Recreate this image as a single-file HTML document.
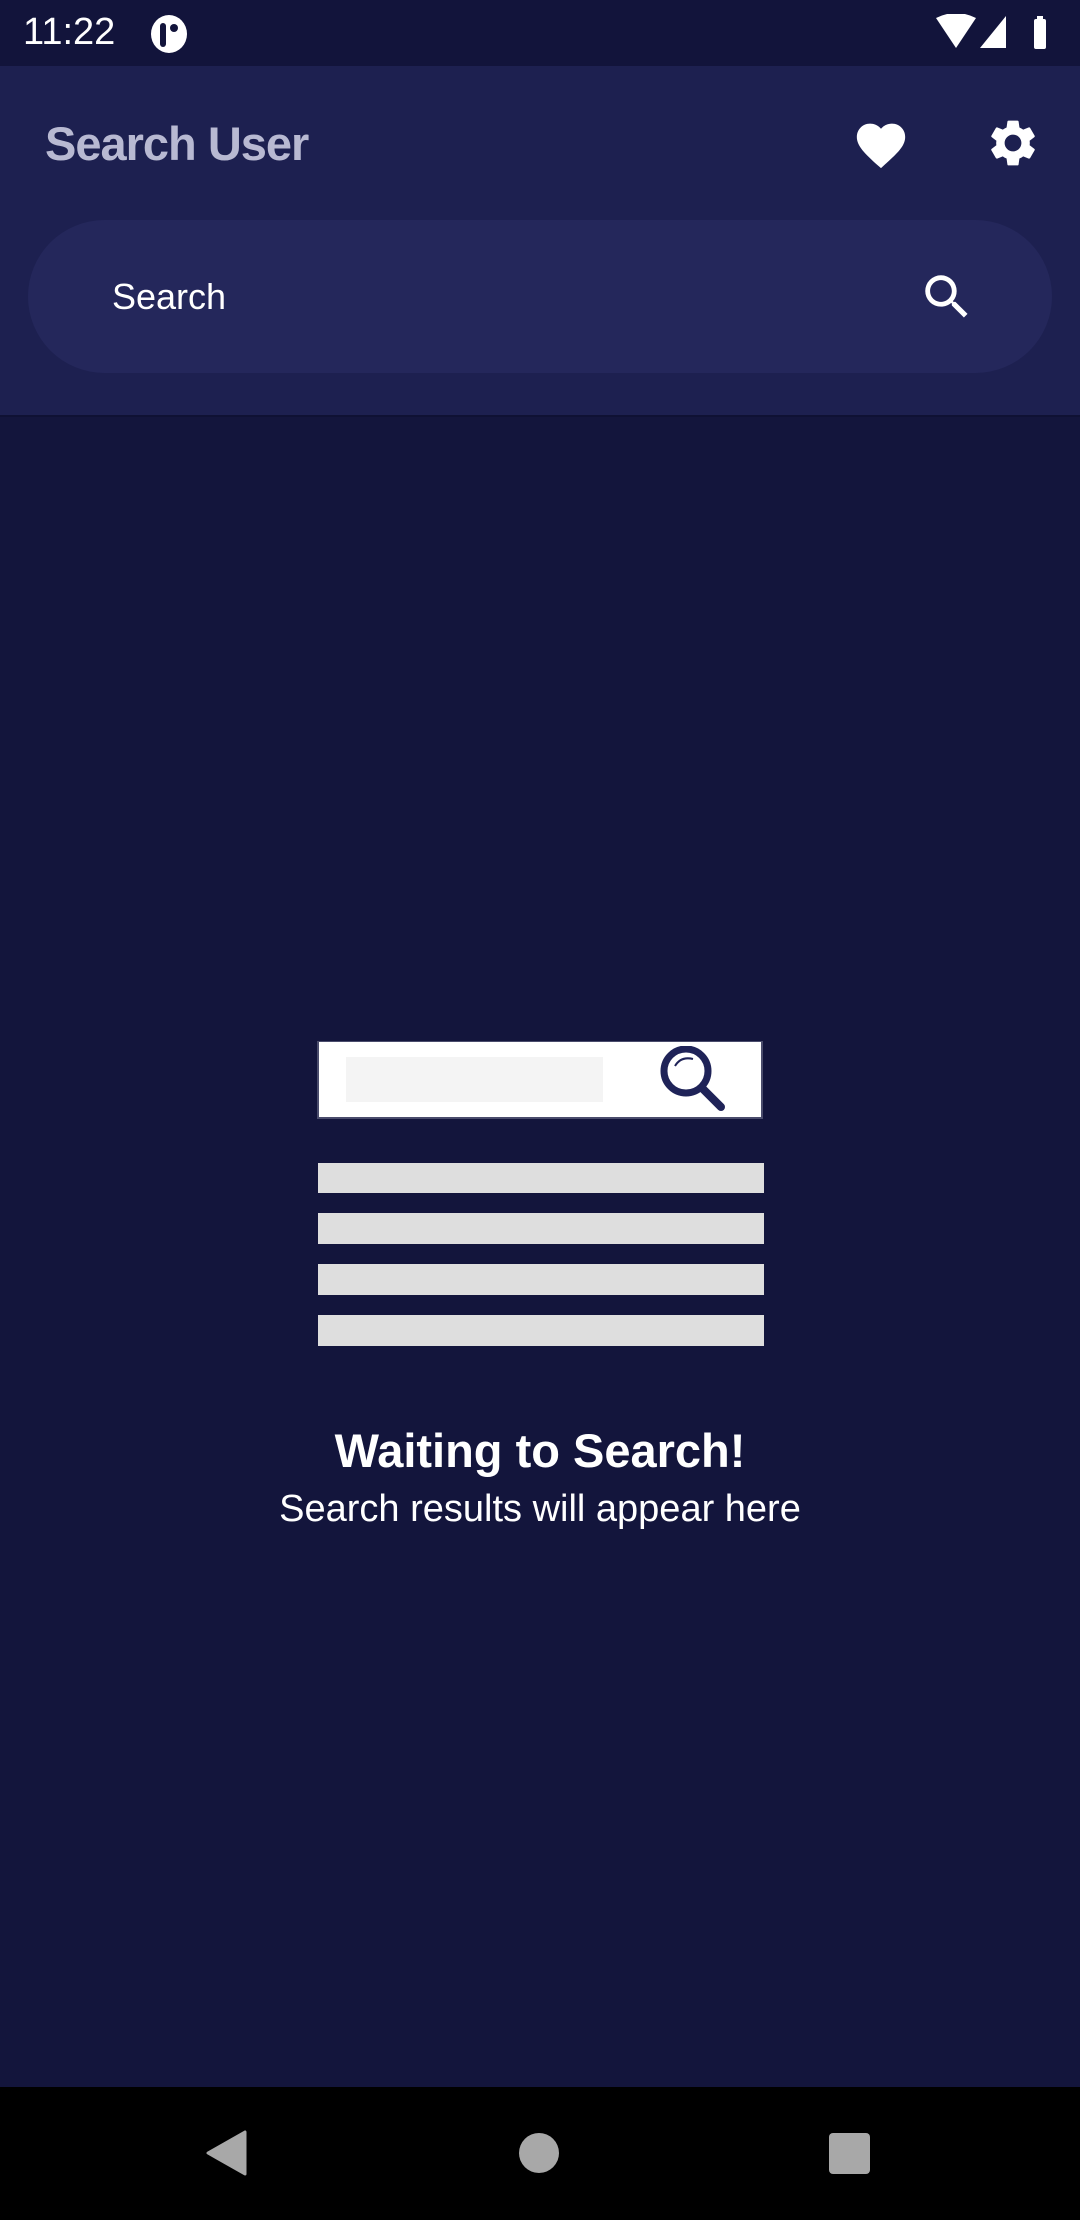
<!DOCTYPE html>
<html><head><meta charset="utf-8"><style>
*{margin:0;padding:0;box-sizing:border-box}
body{width:1080px;height:2220px;background:#13153c;font-family:"Liberation Sans",sans-serif;position:relative;overflow:hidden}
.abs{position:absolute}
</style></head><body>
<div class="abs" style="left:0;top:0;width:1080px;height:66px;background:#12143b"></div>
<div class="abs" style="left:23px;top:11px;color:#fff;font-size:38px">11:22</div>
<svg class="abs" style="left:150px;top:14px" width="38" height="40" viewBox="0 0 38 40"><ellipse cx="19" cy="20" rx="18" ry="19" fill="#fff"/><rect x="10" y="9" width="6" height="24" rx="3" fill="#12143b"/><circle cx="24" cy="14" r="4" fill="#12143b"/></svg>
<svg class="abs" style="left:936px;top:14px" width="110" height="38" viewBox="0 0 110 38"><path d="M0 4 Q20 -6 40 4 L20 34 Z" fill="#fff"/><path d="M44 34 L70 2 L70 34 Z" fill="#fff"/><rect x="101" y="2" width="6" height="4" fill="#fff"/><rect x="98" y="5" width="12" height="30" rx="2" fill="#fff"/></svg>
<div class="abs" style="left:0;top:66px;width:1080px;height:349px;background:#1d2050"></div>
<div class="abs" style="left:45px;top:116px;color:#b8b9d2;font-size:47px;font-weight:bold;letter-spacing:-1px">Search User</div>
<svg class="abs" style="left:852px;top:116px" width="58" height="54" viewBox="0 0 24 22"><path d="M12 21.4l-1.5-1.3C5.4 15.4 2 12.3 2 8.5 2 5.4 4.4 3 7.5 3c1.7 0 3.4.8 4.5 2.1C13.1 3.8 14.8 3 16.5 3 19.6 3 22 5.4 22 8.5c0 3.8-3.4 6.9-8.5 11.5L12 21.4z" fill="#fff"/></svg>
<svg class="abs" style="left:985px;top:115px" width="56" height="56" viewBox="0 0 24 24"><path fill="#fff" d="M19.14 12.94c.04-.3.06-.61.06-.94 0-.32-.02-.64-.07-.94l2.030-1.58a.49.49 0 00.12-.61l-1.92-3.32a.488.488 0 00-.59-.22l-2.39.96c-.5-.38-1.030-.7-1.62-.94l-.36-2.54a.484.484 0 00-.48-.41h-3.84c-.24 0-.43.17-.47.41l-.36 2.54c-.59.24-1.13.57-1.62.94l-2.39-.96c-.22-.08-.47 0-.59.22L2.74 8.87c-.12.21-.08.47.12.61l2.030 1.58c-.05.3-.09.63-.09.94s.02.64.07.94l-2.030 1.58a.49.49 0 00-.12.61l1.92 3.32c.12.22.37.29.59.22l2.39-.96c.5.38 1.030.7 1.62.94l.36 2.54c.05.24.24.41.48.41h3.84c.24 0 .44-.17.47-.41l.36-2.54c.59-.24 1.13-.56 1.62-.94l2.39.96c.22.08.47 0 .59-.22l1.92-3.32c.12-.22.07-.47-.12-.61l-2.010-1.58zM12 15.6c-1.98 0-3.6-1.62-3.6-3.6s1.62-3.6 3.6-3.6 3.6 1.62 3.6 3.6-1.62 3.6-3.6 3.6z"/></svg>
<div class="abs" style="left:28px;top:220px;width:1024px;height:153px;border-radius:77px;background:#24275b"></div>
<div class="abs" style="left:112px;top:276px;color:#fff;font-size:36px">Search</div>
<svg class="abs" style="left:918px;top:268px" width="58" height="58" viewBox="0 0 24 24"><path fill="#fff" d="M15.5 14h-.79l-.28-.27A6.47 6.47 0 0016 9.5 6.5 6.5 0 109.5 16c1.61 0 3.09-.59 4.23-1.57l.27.28v.79l5 4.99L20.49 19l-4.99-5zm-6 0C7.010 14 5 11.99 5 9.5S7.010 5 9.5 5 14 7.010 14 9.5 11.99 14 9.5 14z"/></svg>
<div class="abs" style="left:0;top:415px;width:1080px;height:2px;background:#0f1134"></div>

<div class="abs" style="left:317px;top:1041px;width:446px;height:78px;background:#4a4c6c"></div>
<div class="abs" style="left:319px;top:1042px;width:442px;height:75px;background:#fff"></div>
<div class="abs" style="left:346px;top:1057px;width:257px;height:45px;background:#f4f4f4"></div>
<svg class="abs" style="left:660px;top:1046px" width="75" height="72" viewBox="0 0 75 72"><circle cx="26" cy="25" r="22" fill="none" stroke="#1f2358" stroke-width="7"/><line x1="42" y1="42" x2="61" y2="61" stroke="#1f2358" stroke-width="8" stroke-linecap="round"/><path d="M15 20 Q21 10 33 13" fill="none" stroke="#1f2358" stroke-width="2"/></svg>
<div class="abs" style="left:318px;top:1163px;width:446px;height:30px;background:#dedede"></div>
<div class="abs" style="left:318px;top:1213px;width:446px;height:31px;background:#dedede"></div>
<div class="abs" style="left:318px;top:1264px;width:446px;height:31px;background:#dedede"></div>
<div class="abs" style="left:318px;top:1315px;width:446px;height:31px;background:#dedede"></div>
<div class="abs" style="left:0;top:1423px;width:1080px;text-align:center;color:#fff;font-size:47px;font-weight:bold">Waiting to Search!</div>
<div class="abs" style="left:0;top:1488px;width:1080px;text-align:center;color:#fff;font-size:38px">Search results will appear here</div>

<div class="abs" style="left:0;top:2087px;width:1080px;height:133px;background:#000"></div>
<svg class="abs" style="left:205px;top:2130px" width="42" height="46" viewBox="0 0 42 46"><path d="M40 2 L40 44 L3 23 Z" fill="#a8a8a8" stroke="#a8a8a8" stroke-width="3" stroke-linejoin="round"/></svg>
<div class="abs" style="left:519px;top:2133px;width:40px;height:40px;border-radius:50%;background:#a8a8a8"></div>
<div class="abs" style="left:829px;top:2133px;width:41px;height:41px;border-radius:4px;background:#a8a8a8"></div>
</body></html>
